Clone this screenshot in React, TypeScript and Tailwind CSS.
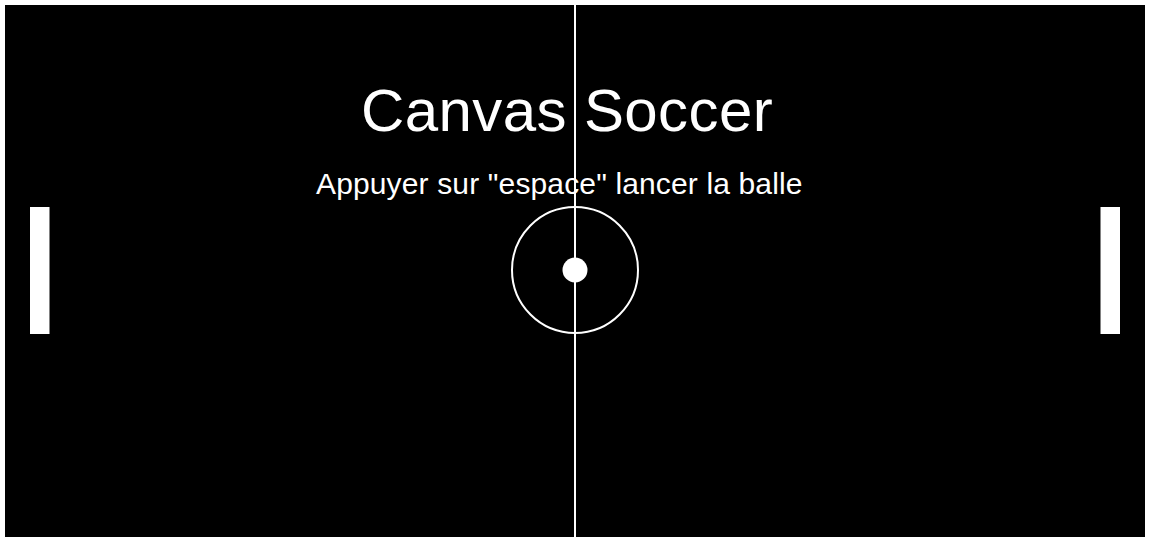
import React from 'react'

const FIELD_W = 1140
const FIELD_H = 532

// Field markings drawn as one svg, text stays as real text on top
function Pitch() {
  const cx = FIELD_W / 2
  const cy = FIELD_H / 2 - 1
  return (
    <svg
      width={FIELD_W}
      height={FIELD_H}
      viewBox={`0 0 ${FIELD_W} ${FIELD_H}`}
      className="absolute inset-0"
    >
      <line x1={cx} y1={0} x2={cx} y2={FIELD_H} stroke="#fff" strokeWidth={2} />
      <circle cx={cx} cy={cy} r={63} fill="none" stroke="#fff" strokeWidth={2} />
      <circle cx={cx} cy={cy} r={12.5} fill="#fff" />
      {/* paddles */}
      <rect x={25} y={202} width={19.5} height={127} fill="#fff" />
      <rect x={FIELD_W - 44.5} y={202} width={19.5} height={127} fill="#fff" />
    </svg>
  )
}

export default function App() {
  return (
    <div className="min-h-screen bg-white p-[5px]">
      <div
        className="relative w-[1140px] h-[532px] bg-black text-white overflow-hidden"
        style={{ fontFamily: '"Liberation Sans", Arial, sans-serif' }}
      >
        <Pitch />
        <div className="absolute left-[356px] top-[76px] text-[60px] leading-none tracking-[0.4px] whitespace-nowrap">
          Canvas Soccer
        </div>
        <div className="absolute left-[311px] top-[164px] text-[30px] leading-none tracking-[0.14px] whitespace-nowrap">
          Appuyer sur "espace" lancer la balle
        </div>
      </div>
    </div>
  )
}
